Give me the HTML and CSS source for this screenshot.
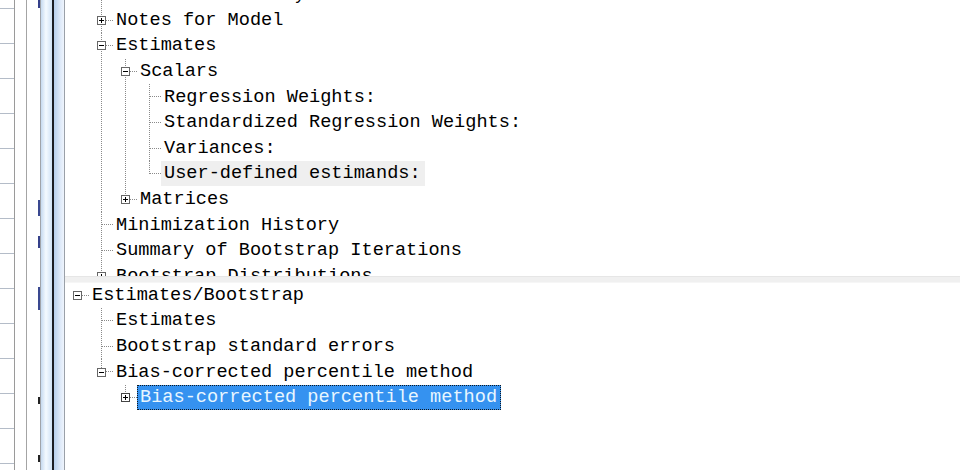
FILE: index.html
```html
<!DOCTYPE html>
<html>
<head>
<meta charset="utf-8">
<link rel="stylesheet" href="styles.css">
</head>
<body>
<div class="window">
  <div class="side">
    <div class="ruler"></div>
    <div class="col2"></div>
    <div class="col3"></div>
    <div class="col4"></div>
    <div class="col5"></div>
  </div>
  <div class="panes">
    <div class="pane top-pane">
      <ul class="tree top-tree">
        <li class="node"><div class="row"><span class="tog"></span><span class="label">Parameter Summary</span></div></li>
        <li class="node"><div class="row"><span class="tog"><svg class="exp" width="9" height="9" viewBox="0 0 9 9"><rect x="0.5" y="0.5" width="8" height="8" fill="#fff" stroke="#666"/><path d="M2 4.5h5M4.5 2v5" stroke="#000"/></svg></span><span class="label">Notes for Model</span></div></li>
        <li class="node"><div class="row"><span class="tog"><svg class="exp" width="9" height="9" viewBox="0 0 9 9"><rect x="0.5" y="0.5" width="8" height="8" fill="#fff" stroke="#666"/><path d="M2 4.5h5" stroke="#000"/></svg></span><span class="label">Estimates</span></div>
          <ul class="tree sub">
            <li class="node"><div class="row"><span class="tog"><svg class="exp" width="9" height="9" viewBox="0 0 9 9"><rect x="0.5" y="0.5" width="8" height="8" fill="#fff" stroke="#666"/><path d="M2 4.5h5" stroke="#000"/></svg></span><span class="label">Scalars</span></div>
              <ul class="tree sub">
                <li class="node"><div class="row"><span class="tog"></span><span class="label">Regression Weights:</span></div></li>
                <li class="node"><div class="row"><span class="tog"></span><span class="label">Standardized Regression Weights:</span></div></li>
                <li class="node"><div class="row"><span class="tog"></span><span class="label">Variances:</span></div></li>
                <li class="node last"><div class="row"><span class="tog"></span><span class="label hover">User-defined estimands:</span></div></li>
              </ul>
            </li>
            <li class="node last"><div class="row"><span class="tog"><svg class="exp" width="9" height="9" viewBox="0 0 9 9"><rect x="0.5" y="0.5" width="8" height="8" fill="#fff" stroke="#666"/><path d="M2 4.5h5M4.5 2v5" stroke="#000"/></svg></span><span class="label">Matrices</span></div></li>
          </ul>
        </li>
        <li class="node"><div class="row"><span class="tog"></span><span class="label">Minimization History</span></div></li>
        <li class="node"><div class="row"><span class="tog"></span><span class="label">Summary of Bootstrap Iterations</span></div></li>
        <li class="node"><div class="row"><span class="tog"><svg class="exp" width="9" height="9" viewBox="0 0 9 9"><rect x="0.5" y="0.5" width="8" height="8" fill="#fff" stroke="#666"/><path d="M2 4.5h5M4.5 2v5" stroke="#000"/></svg></span><span class="label">Bootstrap Distributions</span></div></li>
        <li class="node"><div class="row"><span class="tog"></span><span class="label">Execution Time</span></div></li>
      </ul>
    </div>
    <div class="divider"></div>
    <div class="pane bottom-pane">
      <ul class="tree root-tree">
        <li class="root"><div class="row"><span class="tog"><svg class="exp" width="9" height="9" viewBox="0 0 9 9"><rect x="0.5" y="0.5" width="8" height="8" fill="#fff" stroke="#666"/><path d="M2 4.5h5" stroke="#000"/></svg></span><span class="label">Estimates/Bootstrap</span></div>
          <ul class="tree sub">
            <li class="node"><div class="row"><span class="tog"></span><span class="label">Estimates</span></div></li>
            <li class="node"><div class="row"><span class="tog"></span><span class="label">Bootstrap standard errors</span></div></li>
            <li class="node last"><div class="row"><span class="tog"><svg class="exp" width="9" height="9" viewBox="0 0 9 9"><rect x="0.5" y="0.5" width="8" height="8" fill="#fff" stroke="#666"/><path d="M2 4.5h5" stroke="#000"/></svg></span><span class="label">Bias-corrected percentile method</span></div>
              <ul class="tree sub">
                <li class="node last"><div class="row"><span class="tog"><svg class="exp" width="9" height="9" viewBox="0 0 9 9"><rect x="0.5" y="0.5" width="8" height="8" fill="#fff" stroke="#444"/><path d="M2 4.5h5M4.5 2v5" stroke="#000"/></svg></span><span class="label selected">Bias-corrected percentile method</span></div></li>
              </ul>
            </li>
          </ul>
        </li>
      </ul>
    </div>
  </div>
</div>
</body>
</html>
```

FILE: styles.css
```css
html, body {
  margin: 0;
  padding: 0;
  background: #fff;
}
body {
  width: 960px;
  height: 470px;
  overflow: hidden;
  font-family: "Liberation Mono", "DejaVu Sans Mono", monospace;
  font-size: 18.6px;
  color: #000;
}
.window {
  display: flex;
  width: 960px;
  height: 470px;
}
.side {
  display: flex;
  width: 65px;
  flex: none;
  height: 100%;
}
.ruler {
  width: 14px;
  border-right: 1px solid #9a9a9a;
  background: repeating-linear-gradient(to bottom, transparent 0 8px, #b4bcc8 8px 9px, transparent 9px 35px);
}
.col2 {
  width: 11px;
  border-right: 1px solid #a4a4a4;
  background: #fff;
}
.col3 {
  width: 13px;
  border-right: 1px solid #a0a4aa;
  background:
    linear-gradient(#35408a, #35408a) right 0 top 0 / 2px 8px no-repeat,
    linear-gradient(#3a4890, #3a4890) right 0 top 200px / 2px 16px no-repeat,
    linear-gradient(#35408a, #35408a) right 0 top 236px / 2px 12px no-repeat,
    linear-gradient(#3a4890, #3a4890) right 0 top 287px / 2px 23px no-repeat,
    linear-gradient(#222, #222) right 0 top 397px / 2px 7px no-repeat,
    linear-gradient(#222, #222) right 0 top 455px / 2px 7px no-repeat,
    #fff;
}
.col4 {
  width: 11px;
  border-right: 2px solid #1a1d24;
  background: linear-gradient(to right, #c6daf0, #f4faff 45%, #d0e2f6);
}
.col5 {
  width: 10px;
  border-right: 1px solid #9aa0a8;
  background: linear-gradient(to right, #b6cfee, #dce8f8 60%, #eef4fc);
}
.panes {
  flex: 1;
  display: flex;
  flex-direction: column;
  min-width: 0;
}
.pane {
  overflow: hidden;
  background: #fff;
}
.top-pane {
  height: 276px;
  flex: none;
}
.divider {
  height: 5px;
  flex: none;
  background: #f0f0f0;
  border-top: 1px solid #e6e6e6;
  border-bottom: 1px solid #f6f6f6;
}
.bottom-pane {
  flex: 1;
}
ul.tree {
  list-style: none;
  margin: 0;
  padding: 0;
}
ul.top-tree {
  margin-left: 32px;
  margin-top: -18px;
}
ul.root-tree {
  margin-left: 8px;
  margin-top: -0.5px;
}
ul.sub {
  padding-left: 24px;
}
li.node {
  background-image: repeating-linear-gradient(to bottom, #8a8a8a 0 1px, transparent 1px 2px);
  background-repeat: no-repeat;
  background-position: 4px 0;
  background-size: 1px 100%;
}
li.node.last {
  background-size: 1px 13px;
}
.row {
  display: flex;
  align-items: center;
  height: 25.6px;
  white-space: pre;
  background-image: repeating-linear-gradient(to right, #8a8a8a 0 1px, transparent 1px 2px);
  background-repeat: no-repeat;
  background-position: 5px 12px;
  background-size: 11px 1px;
}
.tog {
  width: 16px;
  flex: none;
  height: 9px;
  display: flex;
  align-items: center;
}
.exp {
  display: block;
}
.label {
  display: block;
  line-height: 25px;
  padding: 0 4px 0 3px;
}
.label.hover {
  background: #efefef;
}
.label.selected {
  background: #3592f0;
  color: #e8f6ff;
  outline: 1px dotted #101820;
  outline-offset: -1px;
}
```
